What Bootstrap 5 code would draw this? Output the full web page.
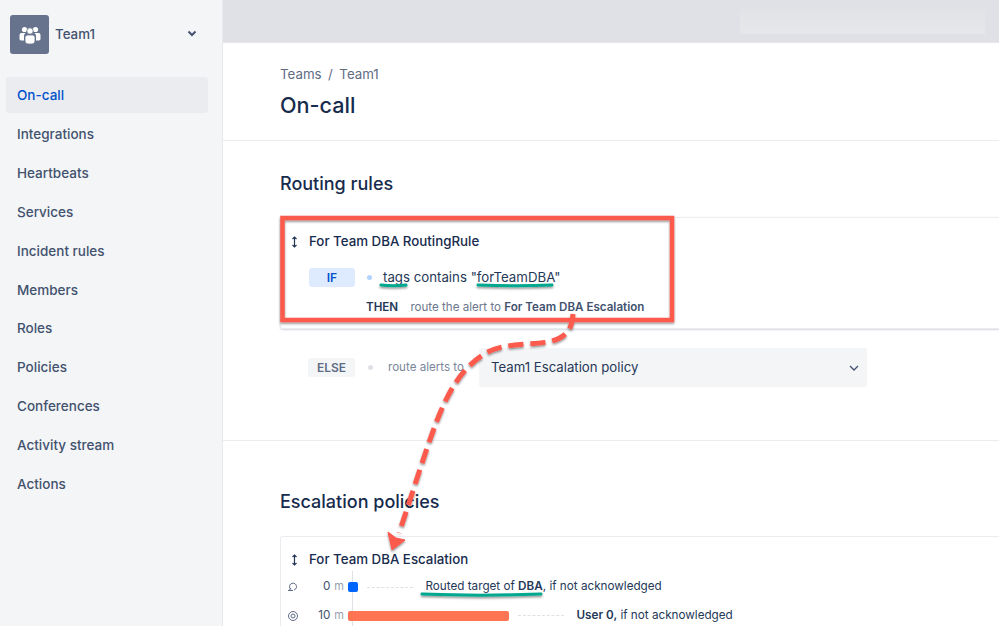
<!DOCTYPE html>
<html lang="en"><head><meta charset="utf-8"><title>On-call</title>
<link href="https://cdn.jsdelivr.net/npm/bootstrap@5.3.0/dist/css/bootstrap.min.css" rel="stylesheet">
<style>
html,body{height:626px;overflow:hidden}
body{font-family:Inter,"Liberation Sans",sans-serif;color:#172b4d;background:#fff;position:relative}
.side{width:223px;height:626px;background:#f4f5f7;border-right:1px solid #e8e9ed;flex:none;padding:15px 14px 0 6px}
.teamhead{height:39px;padding-left:4px;margin-bottom:23px}
.teamicon{width:39px;height:39px;background:#67738c;border-radius:3px;flex:none}
.teamname{font-size:13.3px;font-weight:500;color:#42526e;margin:1px 0 0 6px}
.chev{margin-left:auto;margin-right:11px;margin-top:-3px}
.sideitem{height:36px;line-height:36px;padding-left:11px;font-size:13.5px;font-weight:500;color:#42526e;border-radius:3px;margin-bottom:2.85px}
.sideitem.cur{background:#ebecf0;color:#0052cc;margin-bottom:3.2px}
.topstrip{height:43px;background:#dfe1e6;border-bottom:1px solid #e6e7eb}
.blurbox{width:245px;height:25px;background:linear-gradient(#e1e3e7,#e6e7eb);margin:5px 14px 0 auto}
.pagehead{height:98px;padding:23px 0 0 57px;border-bottom:1px solid #ebecf0}
.crumb{font-size:13.3px;color:#5e6c84;line-height:17px}
.crumb span{padding:0 6.500px}
.ptitle{font-size:21.6px;font-weight:500;line-height:29px;margin:8px 0 0;color:#172b4d}
.sect{padding-left:57px}
.sect h2{font-size:18px;font-weight:500;line-height:24px;margin:0;color:#172b4d}
.h2first{padding-top:31px}
.rulecard{height:112px;margin-top:21px;border:1px solid #ebecf0;border-right:0;border-radius:3px 0 0 3px;box-shadow:0 1px 2px rgba(9,30,66,.18);padding:14px 0 0 9px}
.cardtitle{font-size:13.3px;font-weight:500;line-height:18px;color:#172b4d}
.cardtitle svg{margin-right:10px;vertical-align:-2px}
.ifbadge{width:46px;height:19px;line-height:19px;background:#deebff;color:#0052cc;font-size:12px;font-weight:600;text-align:center;border-radius:3px}
.ifrow{margin:18px 0 0 19px}
.bluedot{width:5px;height:5px;border-radius:50%;background:#b3d4ff;margin:0 11px 0 12px}
.cond{font-size:13.25px;color:#253858}
.thenrow{margin:12px 0 0 76px;font-size:11.6px;line-height:15px;color:#6b778c}
.thenrow b{font-weight:600;color:#42526e}
.thenrow b.th{color:#253858;margin-right:9px}
.elserow{margin:19px 0 0 28px;height:39px}
.elsebadge{width:47px;height:19px;line-height:19px;background:#f4f5f7;color:#5e6c84;font-size:12px;font-weight:600;text-align:center;border-radius:3px}
.greydot{width:5px;height:5px;border-radius:50%;background:#dfe1e6;margin:0 15px 0 13px}
.routeto{font-size:11.6px;color:#7a869a;width:91px;white-space:nowrap;padding-top:1px}
.pick{width:388px;height:39px;background:#f4f5f7;border-radius:3px;font-size:13.2px;color:#253858;padding:1px 8px 0 12px}
.sectline{border-top:1px solid #ebecf0;margin-top:53px}
.esc h2{margin-top:49px}
.esccard{margin-top:22px;border:1px solid #ebecf0;border-right:0;border-radius:3px 0 0 0;padding:13px 0 0 9px;height:120px;position:relative}
.steps{position:relative;margin:9px 0 0 -2px;font-size:11.7px;color:#253858}
.steprow{height:20px;margin-bottom:8.500px}
.sico{width:18px;flex:none}
.smin{width:42px;flex:none;text-align:right;color:#42526e;padding-right:4px}
.smin i{font-style:normal;color:#97a0af;font-size:11px;margin-left:4px}
.bar{height:10px;border-radius:2px;flex:none;position:relative}
.bar0{width:10px;background:#0065ff}
.bar1{width:161px;background:#ff7452}
.dots{border-top:1px dashed #dfe1e6;width:46px;margin:0 12.500px 0 9px;flex:none}
.steptxt b{font-weight:600}
.vline{position:absolute;left:64px;top:-6px;bottom:-30px;width:1px;background:#dfe1e6}
.over{position:absolute;left:0;top:0;pointer-events:none}
</style></head>
<body>
<div class="d-flex">
<aside class="side">
 <div class="teamhead d-flex align-items-center">
  <div class="teamicon d-flex align-items-center justify-content-center">
   <svg width="22" height="18" viewBox="0 0 22 18" fill="#fff"><circle cx="5.500" cy="3.500" r="2.600"/><circle cx="16.500" cy="3.500" r="2.600"/><path d="M2.500 7h4a4 4 0 0 0-1.500 4v3.500H2A1.600 1.600 0 0 1 .5 13V9a2 2 0 0 1 2-2zM19.500 7h-4a4 4 0 0 1 1.500 4v3.500h3a1.600 1.600 0 0 0 1.500-1.500V9a2 2 0 0 0-2-2z"/><circle cx="11" cy="5" r="3.200" stroke="#67738c" stroke-width=".8"/><path d="M8.500 9h5a2.500 2.500 0 0 1 2.500 2.500V15a3 3 0 0 1-3 3H9a3 3 0 0 1-3-3v-3.500A2.500 2.500 0 0 1 8.500 9z" stroke="#67738c" stroke-width=".8"/></svg>
  </div>
  <div class="teamname">Team1</div>
  <svg class="chev" width="10" height="7" viewBox="0 0 10 7" fill="none" stroke="#42526e" stroke-width="2"><path d="M1.500 1.500 5 5l3.500-3.500"/></svg>
 </div>
 <div class="sideitem cur">On-call</div>
 <div class="sideitem">Integrations</div>
 <div class="sideitem">Heartbeats</div>
 <div class="sideitem">Services</div>
 <div class="sideitem">Incident rules</div>
 <div class="sideitem">Members</div>
 <div class="sideitem">Roles</div>
 <div class="sideitem">Policies</div>
 <div class="sideitem">Conferences</div>
 <div class="sideitem">Activity stream</div>
 <div class="sideitem">Actions</div>
</aside>
<main class="flex-grow-1">
 <div class="topstrip pt-1"><div class="blurbox"></div></div>
 <div class="pagehead">
  <div class="crumb">Teams<span>/</span>Team1</div>
  <h1 class="ptitle">On-call</h1>
 </div>
 <section class="sect">
  <h2 class="h2first">Routing rules</h2>
  <div class="rulecard">
   <div class="cardtitle"><svg width="9" height="12" viewBox="0 0 9 12" fill="none" stroke="#253858" stroke-width="1.200"><path d="M4.500 1v10M2.500 3l2-2 2 2M2.500 9l2 2 2-2"/></svg>For Team DBA RoutingRule</div>
   <div class="ifrow d-flex align-items-center"><div class="ifbadge">IF</div><div class="bluedot"></div><div class="cond">tags contains "forTeamDBA"</div></div>
   <div class="thenrow"><b class="th">THEN</b> route the alert to <b>For Team DBA Escalation</b></div>
  </div>
  <div class="elserow d-flex align-items-center">
   <div class="elsebadge">ELSE</div><div class="greydot"></div><div class="routeto">route alerts to</div>
   <div class="pick d-flex align-items-center justify-content-between"><span>Team1 Escalation policy</span><svg width="10" height="6" viewBox="0 0 10 6" fill="none" stroke="#42526e" stroke-width="1.300"><path d="M1 1l4 4 4-4"/></svg></div>
  </div>
 </section>
 <div class="sectline"></div>
 <section class="sect esc">
  <h2>Escalation policies</h2>
  <div class="esccard">
   <div class="cardtitle"><svg width="9" height="12" viewBox="0 0 9 12" fill="none" stroke="#253858" stroke-width="1.200"><path d="M4.500 1v10M2.500 3l2-2 2 2M2.500 9l2 2 2-2"/></svg>For Team DBA Escalation</div>
   <div class="steps">
    <div class="vline"></div>
    <div class="steprow d-flex align-items-center"><div class="sico"><svg width="11" height="10" viewBox="0 0 11 10" fill="none" stroke="#5e6c84"><path d="M3 7.500A3.500 3.500 0 1 1 6 8"/><path d="M0 8.500h5M3 6l-2 2.500"/></svg></div><div class="smin">0<i>m</i></div><div class="bar bar0"></div><div class="dots"></div><div class="steptxt">Routed target of <b>DBA</b>, if not acknowledged</div></div>
    <div class="steprow d-flex align-items-center"><div class="sico"><svg width="10" height="10" viewBox="0 0 10 10" fill="none" stroke="#5e6c84"><circle cx="5" cy="5" r="4.500"/><circle cx="5" cy="5" r="2"/></svg></div><div class="smin">10<i>m</i></div><div class="bar bar1"></div><div class="dots"></div><div class="steptxt"><b>User 0,</b> if not acknowledged</div></div>
   </div>
  </div>
 </section>
</main>
</div>
<svg class="over" width="999" height="626" viewBox="0 0 999 626" fill="none">
 <defs><filter id="sh" x="-5%" y="-5%" width="110%" height="110%"><feDropShadow dx="0" dy="1.500" stdDeviation="1" flood-color="#000" flood-opacity=".45"/></filter></defs>
 <g filter="url(#sh)">
  <rect x="282.500" y="218" width="389.500" height="102" stroke="#fb5a4e" stroke-width="4.500"/>
  <path d="M573 314C572 330 566 338 548 342C530 345 505 343 488 352C462 366 448 392 436 423C424 455 412 495 399 533" stroke="#fb5a4e" stroke-width="5" stroke-dasharray="15 7"/>
  <path d="M392 550 388 532 396 538 405 540Z" fill="#fb5a4e" stroke="#fb5a4e" stroke-width="1"/>
  <path d="M381 285C390 286 398 286 406 285M478 285C505 286 530 286 552 285M422 594C460 595.500 500 595.500 541 594" stroke="#00a88f" stroke-width="3" stroke-linecap="round"/>
 </g>
</svg>
</body></html>
